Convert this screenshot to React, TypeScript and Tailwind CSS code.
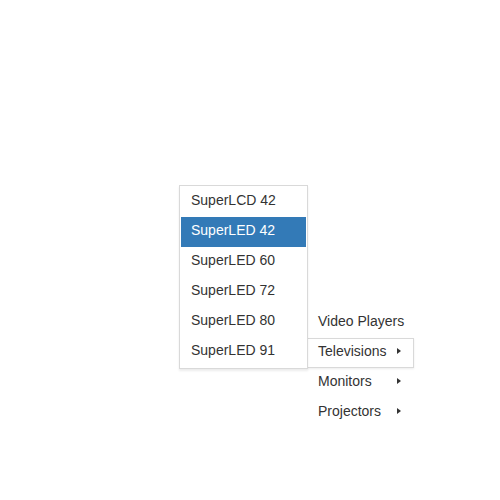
import React from "react";

const subItems = ["SuperLCD 42", "SuperLED 42", "SuperLED 60", "SuperLED 72", "SuperLED 80", "SuperLED 91"];

function Arrow() {
  return (
    <span className="ml-auto block h-0 w-0 border-y-[3px] border-l-[4px] border-y-transparent border-l-[#333333]" />
  );
}

export default function App() {
  return (
    <div
      className="min-h-[500px] w-[500px] bg-white pt-[308px] pl-[307px] text-[14px] text-[#333333]"
      style={{ fontFamily: '"Liberation Sans", Arial, Helvetica, sans-serif' }}
    >
      <div className="w-[107px]">
        <div className="flex items-center whitespace-nowrap border border-transparent pt-[2px] pb-[6px] pl-[10px] pr-[12px] leading-[20px]">
          Video Players
        </div>
        <div className="relative">
          <div className="absolute right-[calc(100%-1px)] bottom-[-1px] z-10 w-[129px] border border-[#d9d9d9] bg-white p-px shadow-[0_2px_2px_rgba(0,0,0,0.08)]">
            {subItems.map((s, i) => (
              <div
                key={s}
                className={
                  i === 1
                    ? "whitespace-nowrap bg-[#337ab7] pt-[3px] pb-[7px] pl-[10px] leading-[20px] text-white"
                    : "whitespace-nowrap pt-[3px] pb-[7px] pl-[10px] leading-[20px]"
                }
              >
                {s}
              </div>
            ))}
          </div>
          <div className="flex items-center whitespace-nowrap border border-[#d9d9d9] bg-white pt-[2px] pb-[6px] pl-[10px] pr-[12px] leading-[20px] shadow-[0_1px_2px_rgba(0,0,0,0.08)]">
            <span>Televisions</span>
            <Arrow />
          </div>
        </div>
        <div className="flex items-center whitespace-nowrap border border-transparent pt-[2px] pb-[6px] pl-[10px] pr-[12px] leading-[20px]">
          <span>Monitors</span>
          <Arrow />
        </div>
        <div className="flex items-center whitespace-nowrap border border-transparent pt-[2px] pb-[6px] pl-[10px] pr-[12px] leading-[20px]">
          <span>Projectors</span>
          <Arrow />
        </div>
      </div>
    </div>
  );
}
